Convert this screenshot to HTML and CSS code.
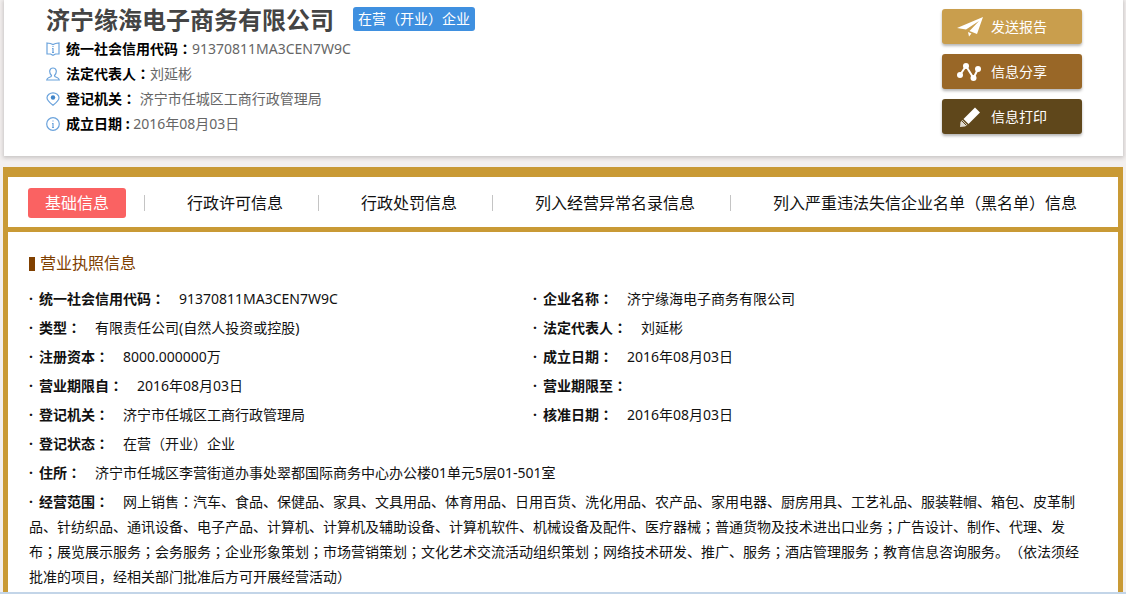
FILE: index.html
```html
<!DOCTYPE html>
<html lang="zh-CN">
<head>
<meta charset="utf-8">
<title>济宁缘海电子商务有限公司</title>
<link rel="stylesheet" href="styles.css">
</head>
<body>
<header class="company">
  <div class="company-main">
    <div class="company-heading">
      <h1 class="company-name">济宁缘海电子商务有限公司</h1>
      <span class="badge">在营（开业）企业</span>
    </div>
    <ul class="facts">
      <li class="fact">
        <svg class="fact-icon" viewBox="0 0 14 14"><path d="M1 1 4.500 1.500 7 2.500 9.500 1.500 13 1V12L9.500 12 7 13.300 4.500 12 1 12Z"/><path d="M7 6v4.500M6 6.500h1M6 10.500h2M7 4v1"/></svg>
        <span><b>统一社会信用代码<span class="mid">：</span></b>91370811MA3CEN7W9C</span>
      </li>
      <li class="fact">
        <svg class="fact-icon" viewBox="0 0 14 14"><path d="M5.500 8.500C4 7 3.500 5 3.800 3.500 4.200 1.800 5.500 1 7 1s2.800.8 3.200 2.500C10.500 5 10 7 8.500 8.500c0 1.500 1 1.500 2.500 2 1.200.4 2 .8 2.300 2.500H.7c.3-1.700 1.100-2.100 2.300-2.500 1.500-.5 2.500-.5 2.500-2Z"/></svg>
        <span><b>法定代表人<span class="mid">：</span></b>刘延彬</span>
      </li>
      <li class="fact">
        <svg class="fact-icon" viewBox="0 0 14 14"><path d="M7 13.300C4 11 1 8.500 1 5.800 1 2.800 4 .8 7 .8s6 2 6 5c0 2.700-3 5.200-6 7.500Z"/><circle class="dot" cx="7" cy="5.500" r="2.200"/></svg>
        <span><b>登记机关<span class="mid">：</span></b> 济宁市任城区工商行政管理局</span>
      </li>
      <li class="fact">
        <svg class="fact-icon" viewBox="0 0 14 14"><circle cx="7" cy="7" r="6.300"/><path d="M7 6v4.500M6 6.500h1M6 10.500h2M7 3.500v1"/></svg>
        <span><b>成立日期 : </b>2016年08月03日</span>
      </li>
    </ul>
  </div>
  <div class="actions">
    <button class="action send" type="button">
      <svg class="action-icon" viewBox="0 0 26 22"><path d="M0 12 26 1 20 18 12.500 15 22 5 9 13.500Z"/><path d="M11 16 14.500 17.500 12 20.500Z"/></svg>发送报告
    </button>
    <button class="action share" type="button">
      <svg class="action-icon" viewBox="0 0 26 22"><path class="link" d="M3 14 9 5 16.500 17 21 8"/><circle cx="3" cy="14" r="3"/><circle cx="9" cy="5" r="3"/><circle cx="16.500" cy="17" r="3"/><circle cx="21" cy="8" r="3"/></svg>信息分享
    </button>
    <button class="action print" type="button">
      <svg class="action-icon" viewBox="0 0 26 22"><path d="M18 1.500 23 6.500 11.500 18 6.500 13Z"/><path d="M5.500 14 10.500 19 8 20.500 3 21 3.500 16Z" opacity=".8"/><path class="cut" d="M5 15 9.500 19.500"/></svg>信息打印
    </button>
  </div>
</header>
<main class="panel">
  <nav class="tabs">
    <a class="tab active" href="#base">基础信息</a>
    <a class="tab" href="#permit">行政许可信息</a>
    <a class="tab" href="#penalty">行政处罚信息</a>
    <a class="tab" href="#abnormal">列入经营异常名录信息</a>
    <a class="tab" href="#blacklist">列入严重违法失信企业名单（黑名单）信息</a>
  </nav>
  <section class="license" id="base">
    <h2 class="license-title">营业执照信息</h2>
    <ul class="details">
      <li><b>统一社会信用代码<span class="mid">：</span></b>91370811MA3CEN7W9C</li>
      <li><b>企业名称<span class="mid">：</span></b>济宁缘海电子商务有限公司</li>
      <li><b>类型<span class="mid">：</span></b>有限责任公司(自然人投资或控股)</li>
      <li><b>法定代表人<span class="mid">：</span></b>刘延彬</li>
      <li><b>注册资本<span class="mid">：</span></b>8000.000000万</li>
      <li><b>成立日期<span class="mid">：</span></b>2016年08月03日</li>
      <li><b>营业期限自<span class="mid">：</span></b>2016年08月03日</li>
      <li><b>营业期限至<span class="mid">：</span></b></li>
      <li><b>登记机关<span class="mid">：</span></b>济宁市任城区工商行政管理局</li>
      <li><b>核准日期<span class="mid">：</span></b>2016年08月03日</li>
      <li class="wide"><b>登记状态<span class="mid">：</span></b>在营（开业）企业</li>
      <li class="wide"><b>住所<span class="mid">：</span></b>济宁市任城区李营街道办事处翠都国际商务中心办公楼01单元5层01-501室</li>
      <li class="wide"><b>经营范围<span class="mid">：</span></b>网上销售<span class="mid">：</span>汽车、食品、保健品、家具、文具用品、体育用品、日用百货、洗化用品、农产品、家用电器、厨房用具、工艺礼品、服装鞋帽、箱包、皮革制品、针纺织品、通讯设备、电子产品、计算机、计算机及辅助设备、计算机软件、机械设备及配件、医疗器械<span class="mid">；</span>普通货物及技术进出口业务<span class="mid">；</span>广告设计、制作、代理、发布<span class="mid">；</span>展览展示服务<span class="mid">；</span>会务服务<span class="mid">；</span>企业形象策划<span class="mid">；</span>市场营销策划<span class="mid">；</span>文化艺术交流活动组织策划<span class="mid">；</span>网络技术研发、推广、服务<span class="mid">；</span>酒店管理服务<span class="mid">；</span>教育信息咨询服务。（依法须经批准的项目，经相关部门批准后方可开展经营活动）</li>
    </ul>
  </section>
</main>
<footer class="edge"></footer>
</body>
</html>
```
FILE: styles.css
```css
* { box-sizing: border-box; }
body {
  margin: 0;
  min-height: 100vh;
  display: flex;
  flex-direction: column;
  background: #f3f0ef;
  color: #111;
  font: 14px/25px "Noto Sans", "Noto Sans CJK SC", sans-serif;
  text-spacing-trim: space-all;
}
h1, h2, ul { margin: 0; padding: 0; }
ul { list-style: none; }
b { font-weight: bold; }
/* Centred full-width colons and semicolons */
.mid { -webkit-locale: "ja"; font-family: "Noto Sans CJK JP", sans-serif; }

.company {
  display: flex;
  justify-content: space-between;
  margin: 0 3px 11px 4px;
  padding: 4px 41px 20px 42px;
  background: #fff;
  box-shadow: 0 1px 4px 1px #c8c4c4;
}
.company-heading { display: flex; align-items: center; gap: 19px; height: 32px; }
.company-name { font-size: 24px; line-height: 32px; color: #444; }
.badge {
  height: 24px;
  margin-bottom: 2px;
  padding: 0 5px;
  border-radius: 3px;
  background: #3f90e0;
  color: #fff;
  line-height: 24px;
}
.fact { display: flex; align-items: center; gap: 6px; height: 25px; color: #666; }
.fact b { color: #000; white-space: pre; }
.fact-icon { width: 14px; height: 14px; fill: none; stroke: #6ba3dc; stroke-width: 1.2; }
.fact-icon .dot { fill: #3f84c8; stroke: none; }

.actions { display: flex; flex-direction: column; gap: 10px; padding-top: 5px; }
.action {
  display: flex;
  align-items: center;
  gap: 8px;
  width: 140px;
  height: 35px;
  padding: 0 15px;
  border: 0;
  border-radius: 3px;
  color: #fff;
  font: inherit;
  box-shadow: 0 2px 3px #b5b5b5;
}
.send { background: #c99e4d; }
.share { background: #996727; }
.print { background: #5f471b; }
.action-icon { width: 26px; height: 22px; fill: #fff; }
.action-icon .link { fill: none; stroke: #fff; stroke-width: 2; }
.action-icon .cut { stroke: #5f471b; stroke-width: 1; }

.panel {
  flex: 1;
  margin: 0 3px;
  border: solid #c99a35;
  border-width: 10px 5px 0;
  background: #fff;
}
.tabs {
  display: flex;
  align-items: center;
  height: 55px;
  padding-left: 20px;
  border-bottom: 5px solid #c99a35;
}
.tab {
  display: flex;
  align-items: center;
  padding: 0 17px;
  border-radius: 3px;
  color: #111;
  font-size: 16px;
  line-height: 30px;
  white-space: nowrap;
  text-decoration: none;
  margin-top: 2px;
}
.tabs .active { background: #fa6262; color: #fff; }
.tab + .tab { position: relative; margin-left: 44px; }
.tab + .tab::before {
  content: "";
  position: absolute;
  left: -26px;
  width: 1px;
  height: 16px;
  background: #c4c4c4;
}
.license { padding: 19px 39px 2px 21px; }
.license-title {
  display: flex;
  align-items: center;
  gap: 5px;
  height: 25px;
  color: #804000;
  font-size: 16px;
  font-weight: normal;
}
.license-title::before { content: ""; width: 6px; height: 14px; background: #804000; }
.details { display: flex; flex-wrap: wrap; row-gap: 4px; padding-top: 10px; }
.details li { width: 48%; }
.details .wide { width: 100%; }
.details li::before { content: "·"; display: inline-block; width: 10px; font-weight: bold; }
.details b { margin-right: 14px; }
.edge { height: 2px; background: #c3d5e8; }
```
